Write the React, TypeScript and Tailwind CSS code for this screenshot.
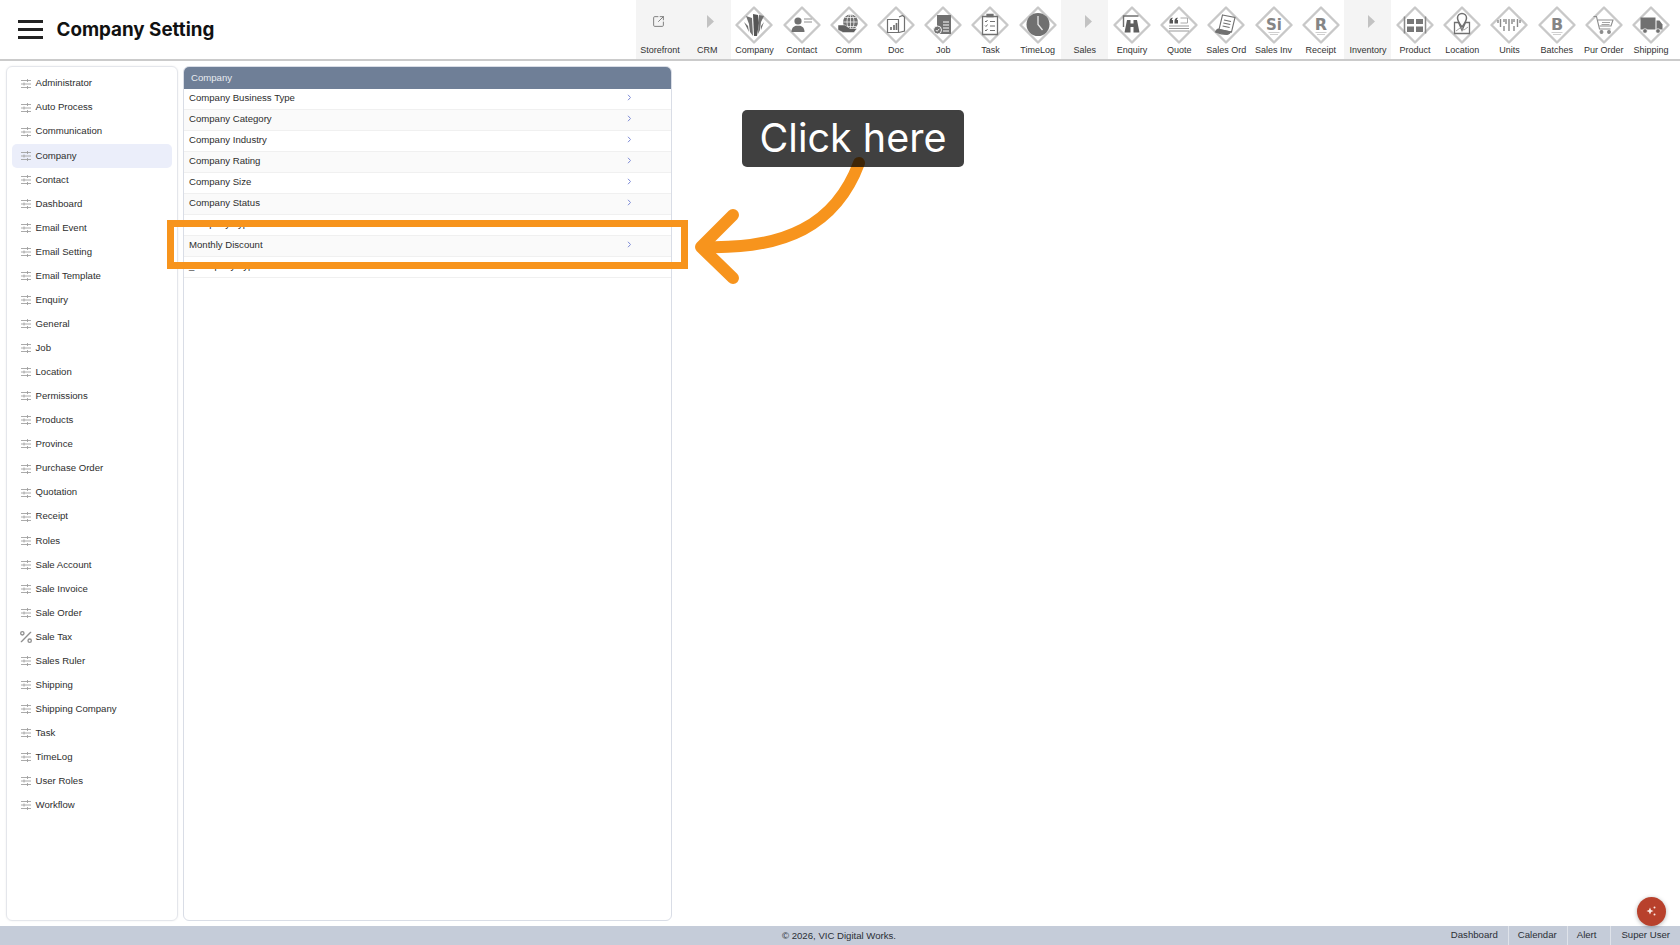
import { Percent, SquareArrowOutUpRight } from "lucide-react"
import type { ReactNode } from "react"

const ink = "#707070"

function Letter({ children, size = 15 }: { children: string; size?: number }) {
  return (
    <>
      <text x="20" y="24.5" textAnchor="middle" fontSize={size} fontWeight="700" fill="#858585" fontFamily="'DejaVu Sans', sans-serif">
        {children}
      </text>
      <path d="M14.5 27.5h11M16 29.5h8" stroke="#cfcfcf" strokeWidth="1" />
    </>
  )
}

const glyphs: Record<string, ReactNode> = {
  Company: (
    <g fill={ink}>
      <path d="M12 11l6 2 1 18-3-4-1-8z" />
      <path d="M19 9l5 1 1 8-2 13h-3z" fill="#555" />
      <path d="M25 10l5 1-3 6-1 8-2 4z" />
      <path d="M10 17l4 4 1 6zM30 17l-3 8 0-4z" />
    </g>
  ),
  Contact: (
    <g fill={ink}>
      <circle cx="16" cy="16" r="3.6" />
      <path d="M9.5 27c0-4 2-5.500 4.500-6.200h4c2.500.7 4.500 2.200 4.500 6.200z" />
      <path d="M22 14h8M22 17h8" stroke="#b5b5b5" strokeWidth="1.300" />
    </g>
  ),
  Comm: (
    <g>
      <circle cx="21.500" cy="17" r="7.500" fill={ink} />
      <path d="M14 17h15M21.500 9.500v15M16 12.500h11M16 21.500h11" stroke="#fff" strokeWidth=".7" />
      <ellipse cx="21.500" cy="17" rx="3.500" ry="7.500" fill="none" stroke="#fff" strokeWidth=".7" />
      <path d="M9 20h7l5 3.500h7l-3 4H14l-5-2.500z" fill="#5f5f5f" stroke="#fff" strokeWidth=".5" />
    </g>
  ),
  Doc: (
    <g fill="none" stroke={ink} strokeWidth="1.200">
      <path d="M11.500 14.500h11v13h-11z" />
      <path d="M23 12l3.500-1.500 2 1.500v14l-5.500 1.500" />
      <path d="M15 25v-3M18 25v-5M20.500 25v-7" strokeWidth="1.700" />
    </g>
  ),
  Job: (
    <g>
      <path d="M14 10h14v19H14z" fill={ink} />
      <path d="M20 17h6M20 20h6M20 23h6M20 26h6" stroke="#fff" strokeWidth="1" />
      <circle cx="14.500" cy="25" r="4" fill={ink} stroke="#fff" strokeWidth=".9" />
      <path d="M12.800 25l1.300 1.300 2.200-2.500" fill="none" stroke="#fff" strokeWidth=".9" />
    </g>
  ),
  Task: (
    <g fill="none" stroke={ink} strokeWidth="1.300">
      <path d="M12.500 11.500h15v18h-15z" />
      <path d="M17 11.500v-2h6v2z" fill={ink} />
      <path d="M15 16l1 1 1.500-2M15 20.500l1 1 1.500-2M15 25l1 1 1.500-2M20 16.500h5M20 21h5M20 25.500h5" strokeWidth="1" />
    </g>
  ),
  TimeLog: (
    <g>
      <circle cx="20" cy="19.500" r="11.500" fill={ink} />
      <path d="M20 11v8.500l4.500 5.500" fill="none" stroke="#e8e8e8" strokeWidth="1.300" />
    </g>
  ),
  Enquiry: (
    <g>
      <path d="M11.500 22v-11h15" fill="none" stroke={ink} strokeWidth="1.400" />
      <path d="M15 15h3.500v12.500h-6zM21.500 15H25l2.500 12.500h-6zM18 18.500h4v3.500h-4z" fill="#5f5f5f" />
    </g>
  ),
  Quote: (
    <g>
      <path d="M13.500 12.500c-1.800.5-3 1.800-3 3.500v2.500h3.500V15h-1.200c0-.7.300-1 .7-1.200zM18.500 12.500c-1.800.5-3 1.800-3 3.500v2.500H19V15h-1.200c0-.7.300-1 .7-1.200z" fill="#555" />
      <path d="M21.500 13h7v5h-7" fill="none" stroke="#aaa" strokeWidth="1" />
      <path d="M10 21h20M10 23.500h20M10 26h20" stroke="#9a9a9a" strokeWidth="1.100" />
    </g>
  ),
  "Sales Ord": (
    <g fill="none" stroke={ink} strokeWidth="1.100">
      <path d="M16.500 10l12.500 2.500-3.500 14.500-12.500-2.500z" />
      <path d="M18 15l7 1.500M17.300 18l7 1.500M16.600 21l7 1.500" />
      <path d="M9.500 27c1.500-3 3-3.500 4-2.500l11 2.500c-1 2-2 2.500-3.500 2.500-3 0-8-1-11.500-2.500z" fill={ink} />
    </g>
  ),
  "Sales Inv": <Letter size={15}>Si</Letter>,
  Receipt: <Letter size={16}>R</Letter>,
  Product: (
    <g>
      <path d="M9.500 11.500v17M30.500 11.500v17" stroke="#888" strokeWidth="1.500" />
      <path d="M12 14h7v5h-7zM21 14h7v5h-7zM12 21.500h7v5.500h-7zM21 21.500h7v5.500h-7z" fill="#777" />
    </g>
  ),
  Location: (
    <g>
      <path d="M12.500 17.500h4l3.500 8 3.500-8h4v11h-15z" fill="none" stroke={ink} strokeWidth="1.300" />
      <path d="M20 8.500a4.500 4.500 0 0 1 4.500 4.500c0 3-4.500 9-4.500 9s-4.500-6-4.500-9A4.500 4.500 0 0 1 20 8.500z" fill="none" stroke={ink} strokeWidth="1.500" />
      <path d="M14 26l4-3 4 2 4-3" fill="none" stroke="#999" strokeWidth=".9" />
    </g>
  ),
  Units: (
    <path d="M9 15v3M11.500 14v8M15 14v3M17 14v5M20 14v12M23 14v5M25 14v3M28.500 14v8M31 15v3M15 21v5M25 21v5" stroke="#8a8a8a" strokeWidth="1.400" fill="none" />
  ),
  Batches: <Letter size={16}>B</Letter>,
  "Pur Order": (
    <g fill="none" stroke="#8c8c8c" strokeWidth="1.100">
      <path d="M9.500 11.500h3l3 12.500h11" />
      <path d="M14 15h15l-2 6H15.500" />
      <path d="M18 17.500h8M17.500 19.500h8" strokeWidth=".8" />
      <circle cx="17.500" cy="27" r="1.400" fill="#8c8c8c" />
      <circle cx="25" cy="27" r="1.400" fill="#8c8c8c" />
    </g>
  ),
  Shipping: (
    <g fill={ink}>
      <path d="M9.500 12.500h15v12h-15z" />
      <path d="M25.500 15.500h3l3 4v5h-6z" />
      <circle cx="14" cy="26" r="2.300" stroke="#fff" strokeWidth=".7" />
      <circle cx="27" cy="26" r="2.300" stroke="#fff" strokeWidth=".7" />
    </g>
  ),
}

const toolbar: { label: string; kind: "link" | "group" | "icon" }[] = [
  { label: "Storefront", kind: "link" },
  { label: "CRM", kind: "group" },
  { label: "Company", kind: "icon" },
  { label: "Contact", kind: "icon" },
  { label: "Comm", kind: "icon" },
  { label: "Doc", kind: "icon" },
  { label: "Job", kind: "icon" },
  { label: "Task", kind: "icon" },
  { label: "TimeLog", kind: "icon" },
  { label: "Sales", kind: "group" },
  { label: "Enquiry", kind: "icon" },
  { label: "Quote", kind: "icon" },
  { label: "Sales Ord", kind: "icon" },
  { label: "Sales Inv", kind: "icon" },
  { label: "Receipt", kind: "icon" },
  { label: "Inventory", kind: "group" },
  { label: "Product", kind: "icon" },
  { label: "Location", kind: "icon" },
  { label: "Units", kind: "icon" },
  { label: "Batches", kind: "icon" },
  { label: "Pur Order", kind: "icon" },
  { label: "Shipping", kind: "icon" },
]

const menu = [
  "Administrator", "Auto Process", "Communication", "Company", "Contact", "Dashboard", "Email Event", "Email Setting",
  "Email Template", "Enquiry", "General", "Job", "Location", "Permissions", "Products", "Province", "Purchase Order",
  "Quotation", "Receipt", "Roles", "Sale Account", "Sale Invoice", "Sale Order", "Sale Tax", "Sales Ruler", "Shipping",
  "Shipping Company", "Task", "TimeLog", "User Roles", "Workflow",
]

const rows = [
  "Company Business Type", "Company Category", "Company Industry", "Company Rating", "Company Size", "Company Status",
  "Company Type", "Monthly Discount", "_Company Type",
]

function ToolbarItem({ label, kind }: { label: string; kind: string }) {
  return (
    <div className={`flex w-[47.2px] shrink-0 flex-col items-center ${kind === "icon" ? "" : "bg-[#f4f4f4]"}`}>
      <div className="mt-[5px] flex h-10 w-10 items-center justify-center">
        {kind === "link" && <SquareArrowOutUpRight className="mb-2 mr-1 h-[13px] w-[13px] text-[#777]" strokeWidth={1.7} />}
        {kind === "group" && (
          <svg width="40" height="40" viewBox="0 0 40 40">
            <path d="M20 10l7 6.500-7 6.500z" fill="#c2c2c2" />
          </svg>
        )}
        {kind === "icon" && (
          <svg width="40" height="40" viewBox="0 0 40 40">
            <path d="M20 2.500L37.500 20 20 37.500 2.500 20z" fill="#fff" stroke="#c8c8c8" strokeWidth="2.400" strokeLinejoin="round" />
            {glyphs[label]}
          </svg>
        )}
      </div>
      <span className="h-[14px] whitespace-nowrap text-[9px] leading-[11px] text-[#333]">{label}</span>
    </div>
  )
}

function SlidersGlyph() {
  return (
    <svg width="10" height="10" viewBox="0 0 10 10" className="shrink-0">
      <path d="M0 1.500h10M0 5h10M0 8.500h10" stroke="#a0a0a0" strokeWidth=".9" />
      <path d="M6.500 0v3M3 3.500v3M6.500 7v3" stroke="#a0a0a0" strokeWidth=".9" />
    </svg>
  )
}

export default function App() {
  return (
    <div className="relative flex h-screen flex-col overflow-hidden bg-white font-['Liberation_Sans',Arial,sans-serif]">
      <header className="flex h-[61px] shrink-0 items-start border-b-2 border-[#cbcbcb]">
        <div className="ml-[18px] mt-[20px] flex w-[25px] flex-col gap-[5.5px]">
          <div className="h-[2.5px] bg-[#222]" />
          <div className="h-[2.5px] bg-[#222]" />
          <div className="h-[2.5px] bg-[#222]" />
        </div>
        <h1 className="ml-[13.500px] mt-[16.500px] font-['Inter',sans-serif] text-[18.8px] font-bold leading-[26px] text-[#111]">Company Setting</h1>
        <div className="ml-auto mr-[5.400px] flex h-[59px]">
          {toolbar.map((t) => (
            <ToolbarItem key={t.label} label={t.label} kind={t.kind} />
          ))}
        </div>
      </header>

      <main className="flex min-h-0 flex-1 gap-[5px] pb-[5px] pl-[6px] pr-[8px] pt-[5px]">
        <aside className="w-[172px] shrink-0 rounded-md border border-[#e4e6eb] px-[5px] pt-[4.500px] shadow-[0_0_2px_rgba(0,0,0,0.08)]">
          {menu.map((m) => (
            <div
              key={m}
              className={`flex h-[24.07px] items-center gap-[5px] rounded-[5px] pl-[8.500px] text-[9.6px] text-[#2e2e2e] ${m === "Company" ? "bg-[#ebeefa]" : ""}`}
            >
              {m === "Sale Tax" ? <Percent className="-mx-[3px] h-[16px] w-[16px] shrink-0 text-[#8f8f8f]" strokeWidth={2} /> : <SlidersGlyph />}
              <span>{m}</span>
            </div>
          ))}
        </aside>

        <section className="w-[489px] shrink-0 overflow-hidden rounded-md border border-[#d9dde6]">
          <div className="flex h-[21.5px] items-center bg-[#6f7f97] pl-[7px] text-[9.6px] text-[#e8ebf0]">Company</div>
          {rows.map((r, i) => (
            <div
              key={r}
              className={`flex h-[21px] items-center justify-between border-b border-[#f0f0f0] pl-[5px] pr-[39px] text-[9.6px] text-[#2e2e2e] ${i % 2 ? "bg-[#fafafa]" : "bg-white"}`}
            >
              <span>{r}</span>
              <svg width="5" height="7" viewBox="0 0 5 7" className="mb-[3px]">
                <path d="M1 .8l2.500 2.700L1 6.200" fill="none" stroke="#7f8cd6" strokeWidth="1" />
              </svg>
            </div>
          ))}
        </section>
      </main>

      <footer className="grid h-[19px] shrink-0 grid-cols-[1fr_auto_1fr] items-stretch bg-[#c5ccd9] text-[9.6px] text-[#2b2f36]">
        <div />
        <div className="flex items-center pr-[2px] pt-[1px]">© 2026, VIC Digital Works.</div>
        <div className="flex justify-end pr-[10px]">
          <div className="flex items-center pr-[10px]">Dashboard</div>
          <div className="flex items-center border-l border-[#dfe3ea] pl-[9px] pr-[10px]">Calendar</div>
          <div className="flex items-center border-l border-[#dfe3ea] pl-[9px] pr-[14px]">Alert</div>
          <div className="flex items-center border-l border-[#dfe3ea] pl-[10px]">Super User</div>
        </div>
      </footer>

      {/* tutorial annotation on top of the page */}
      <div className="pointer-events-none absolute left-[167px] top-[220px] h-[49px] w-[521px] border-[7px] border-[#f7941d]" />
      <svg width="1680" height="945" viewBox="0 0 1680 945" className="pointer-events-none absolute left-0 top-0">
        <path d="M859 163C836 225 785 250 702 247" fill="none" stroke="#f7941d" strokeWidth="12" strokeLinecap="round" />
        <path d="M733 215L701 247L733 278" fill="none" stroke="#f7941d" strokeWidth="12" strokeLinecap="round" strokeLinejoin="round" />
      </svg>
      <div className="absolute left-[742px] top-[110px] flex h-[57px] w-[222px] items-center justify-center rounded-[5px] bg-black/75 pt-[1px] font-['Inter',sans-serif] text-[39.5px] text-white">
        Click here
      </div>
      <div className="absolute left-[1636.500px] top-[896.500px] flex h-[29px] w-[29px] items-center justify-center rounded-full bg-[#b8412c] shadow-[0_1px_4px_rgba(0,0,0,0.3)]">
        <svg width="12" height="12" viewBox="0 0 12 12" fill="#fbe9e4">
          <path d="M5 2.500l1.100 2.400L8.500 6 6.100 7.100 5 9.500 3.900 7.100 1.500 6l2.400-1.100z" />
          <circle cx="9.500" cy="2.500" r="1" />
          <circle cx="9.500" cy="9.500" r="1" />
        </svg>
      </div>
    </div>
  )
}
